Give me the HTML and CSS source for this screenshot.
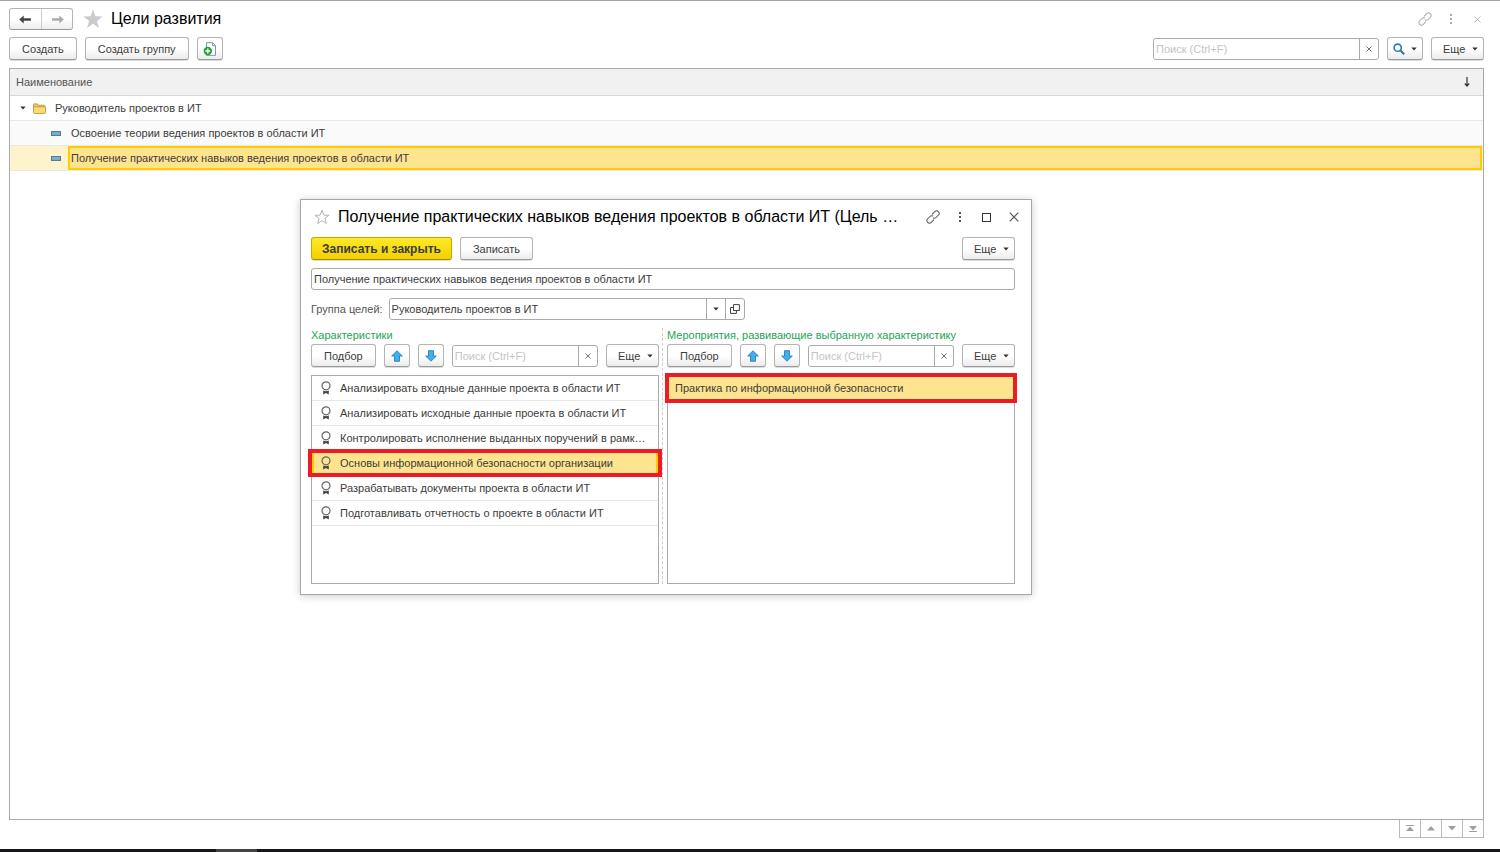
FILE: index.html
```html
<!DOCTYPE html>
<html lang="ru">
<head>
<meta charset="utf-8">
<title>Цели развития</title>
<link rel="stylesheet" href="styles.css">
</head>
<body>
<svg class="defs" aria-hidden="true">
  <symbol id="link" viewBox="0 0 14 14"><g transform="rotate(-45 7 7)" fill="none" stroke="currentColor" stroke-width="1" stroke-linecap="round"><path d="M5.500 9.500H2a2.500 2.500 0 0 1 0-5h3.200a2.500 2.500 0 0 1 2.300 1.600"/><path d="M8.500 4.500H12a2.500 2.500 0 0 1 0 5H8.800a2.500 2.500 0 0 1-2.300-1.600"/></g></symbol>
  <symbol id="dots" viewBox="0 0 4 12"><path fill="currentColor" d="M1 1h2v2H1zM1 5h2v2H1zM1 9h2v2H1z"/></symbol>
  <symbol id="cross" viewBox="0 0 10 10"><path d="M.7.7l8.600 8.600M9.300.7.7 9.300" fill="none" stroke="currentColor" stroke-width="1.200"/></symbol>
  <symbol id="caret" viewBox="0 0 6 4"><path d="M.3.5h5.400L3 3.500z" fill="currentColor"/></symbol>
  <symbol id="arrow" viewBox="0 0 14 10"><path d="M0 5 5 .5v3.200h8v2.600H5v3.200z" fill="currentColor"/></symbol>
  <symbol id="up" viewBox="0 0 12 12"><path d="M6 .8 11.300 6H8.500v5.300h-5V6H.7z" fill="#3fb0ee" stroke="#2a7fb4" stroke-width=".9" stroke-linejoin="round"/></symbol>
  <symbol id="down" viewBox="0 0 12 12"><path d="M6 11.200.7 6h2.800V.7h5V6h2.800z" fill="#3fb0ee" stroke="#2a7fb4" stroke-width=".9" stroke-linejoin="round"/></symbol>
  <symbol id="medal" viewBox="0 0 10 14"><circle cx="5" cy="4.800" r="4" fill="none" stroke="#666" stroke-width="1.200"/><path d="M2.200 9.500q2.800 1.300 5.600 0V13.500L5 12 2.200 13.500z" fill="#444"/></symbol>
</svg>

<main class="page">
  <header class="titlebar">
    <div class="nav">
      <button type="button" class="nav-btn" aria-label="Назад"><svg class="arrow"><use href="#arrow"/></svg></button>
      <button type="button" class="nav-btn nav-next" aria-label="Вперед"><svg class="arrow"><use href="#arrow"/></svg></button>
    </div>
    <svg class="star" viewBox="0 0 20 20"><path d="M10 .5l2.400 6.800 7.200.2-5.700 4.400 2 7L10 14.800l-5.900 4.100 2-7L.4 7.500l7.200-.2z" fill="#c9cbcd"/></svg>
    <h1 class="title">Цели развития</h1>
    <div class="win-tools muted">
      <button type="button" class="bare" aria-label="Ссылка"><svg class="i-link"><use href="#link"/></svg></button>
      <button type="button" class="bare" aria-label="Меню"><svg class="i-dots"><use href="#dots"/></svg></button>
      <button type="button" class="bare" aria-label="Закрыть"><svg class="i-small"><use href="#cross"/></svg></button>
    </div>
  </header>

  <div class="toolbar">
    <button type="button" class="btn">Создать</button>
    <button type="button" class="btn">Создать группу</button>
    <button type="button" class="btn icon-btn" aria-label="Создать копированием"><svg class="i-doc" viewBox="0 0 14 14"><path d="M3.500.6h6l3 3v9.800h-9z" fill="#fff" stroke="#7f98ad"/><path d="M9.500.6v3h3" fill="none" stroke="#7f98ad"/><circle cx="4.800" cy="9" r="4.200" fill="#25a336"/><path d="M4.800 6.600v4.800M2.400 9h4.800" stroke="#fff" stroke-width="1.400"/></svg></button>
    <div class="search search-main">
      <input class="field" type="text" placeholder="Поиск (Ctrl+F)" aria-label="Поиск">
      <button type="button" class="seg" aria-label="Очистить"><svg class="i-x"><use href="#cross"/></svg></button>
    </div>
    <button type="button" class="btn find" aria-label="Найти"><svg class="i-find" viewBox="0 0 12 12"><circle cx="4.700" cy="4.700" r="3.600" fill="none" stroke="#2878b4" stroke-width="1.600"/><path d="M7.500 7.500l3.700 3.700" stroke="#2878b4" stroke-width="2"/></svg><svg class="i-caret"><use href="#caret"/></svg></button>
    <button type="button" class="btn more">Еще<svg class="i-caret"><use href="#caret"/></svg></button>
  </div>

  <section class="grid">
    <table class="tree">
      <thead>
        <tr><th scope="col"><div class="head">Наименование<svg class="i-sort" viewBox="0 0 6 10"><path d="M3 0v9M.8 6.500 3 9l2.200-2.500" fill="none" stroke="#333" stroke-width="1.200"/></svg></div></th></tr>
      </thead>
      <tbody>
        <tr><td><div class="node"><svg class="i-caret open"><use href="#caret"/></svg><svg class="i-folder" viewBox="0 0 13 11"><path d="M.5 9.500V1.700q0-.8.8-.8h3l1.200 1.400h5.200q.8 0 .8.800v1" fill="#f0c95c" stroke="#c59a35"/><path d="M.5 3.800h12v5.700q0 .9-.9.9H1.400q-.9 0-.9-.9z" fill="#fcd978" stroke="#c99f3c"/></svg><span>Руководитель проектов в ИТ</span></div></td></tr>
        <tr class="alt"><td><div class="leaf"><span class="dash"></span><span class="cell">Освоение теории ведения проектов в области ИТ</span></div></td></tr>
        <tr class="current"><td><div class="leaf"><span class="dash"></span><span class="cell">Получение практических навыков ведения проектов в области ИТ</span></div></td></tr>
      </tbody>
    </table>
  </section>
  <nav class="pager" aria-label="Прокрутка">
    <button type="button" aria-label="В начало"><svg viewBox="0 0 8 7"><path d="M0 0h8v1H0zM0 6h8L4 1.500z"/></svg></button>
    <button type="button" aria-label="Вверх"><svg viewBox="0 0 8 7"><path d="M0 5.500h8L4 1z"/></svg></button>
    <button type="button" aria-label="Вниз"><svg viewBox="0 0 8 7"><path d="M0 1h8L4 5.500z"/></svg></button>
    <button type="button" aria-label="В конец"><svg viewBox="0 0 8 7"><path d="M0 6h8v1H0zM0 1h8L4 5.500z"/></svg></button>
  </nav>
</main>
<div class="taskbar"><span class="task"></span></div>

<div class="dialog" role="dialog" aria-labelledby="dlg-title">
  <header class="dlg-head">
    <svg class="dlg-star" viewBox="0 0 16 16"><path d="M8 1.200l1.800 4.900 5.200.2-4.100 3.200 1.400 5L8 11.600l-4.300 2.900 1.400-5L1 6.300l5.200-.2z" fill="none" stroke="#b4b4b4"/></svg>
    <h2 class="title dlg-title" id="dlg-title">Получение практических навыков ведения проектов в области ИТ (Цель …</h2>
    <div class="win-tools">
      <button type="button" class="bare" aria-label="Ссылка"><svg class="i-link"><use href="#link"/></svg></button>
      <button type="button" class="bare" aria-label="Меню"><svg class="i-dots"><use href="#dots"/></svg></button>
      <button type="button" class="bare" aria-label="Развернуть"><span class="square"></span></button>
      <button type="button" class="bare" aria-label="Закрыть"><svg class="i-close"><use href="#cross"/></svg></button>
    </div>
  </header>
  <div class="dlg-body">
    <div class="toolbar">
      <button type="button" class="btn primary">Записать и закрыть</button>
      <button type="button" class="btn">Записать</button>
      <button type="button" class="btn more push">Еще<svg class="i-caret"><use href="#caret"/></svg></button>
    </div>
    <input class="field boxed" type="text" aria-label="Наименование" value="Получение практических навыков ведения проектов в области ИТ">
    <div class="group-row">
      <label for="group">Группа целей:</label>
      <div class="search group">
        <input class="field" id="group" type="text" value="Руководитель проектов в ИТ">
        <button type="button" class="seg" aria-label="Выбрать"><svg class="i-caret"><use href="#caret"/></svg></button>
        <button type="button" class="seg" aria-label="Открыть"><svg class="i-open" viewBox="0 0 10 10"><path d="M3.500.6h5.900v5.900H3.500zM3.500 3.500h-3v5.900h5.900V6.500" fill="none" stroke="#444"/></svg></button>
      </div>
    </div>
    <div class="columns">
      <section class="col">
        <h3 class="caption">Характеристики</h3>
        <div class="toolbar">
          <button type="button" class="btn">Подбор</button>
          <button type="button" class="btn icon-btn" aria-label="Вверх"><svg class="i-move"><use href="#up"/></svg></button>
          <button type="button" class="btn icon-btn" aria-label="Вниз"><svg class="i-move"><use href="#down"/></svg></button>
          <div class="search">
            <input class="field" type="text" placeholder="Поиск (Ctrl+F)" aria-label="Поиск характеристик">
            <button type="button" class="seg" aria-label="Очистить"><svg class="i-x"><use href="#cross"/></svg></button>
          </div>
          <button type="button" class="btn more">Еще<svg class="i-caret"><use href="#caret"/></svg></button>
        </div>
        <ul class="list">
          <li><svg class="i-medal"><use href="#medal"/></svg><span>Анализировать входные данные проекта в области ИТ</span></li>
          <li><svg class="i-medal"><use href="#medal"/></svg><span>Анализировать исходные данные проекта в области ИТ</span></li>
          <li><svg class="i-medal"><use href="#medal"/></svg><span>Контролировать исполнение выданных поручений в рамк…</span></li>
          <li class="picked marked"><svg class="i-medal"><use href="#medal"/></svg><span>Основы информационной безопасности организации</span></li>
          <li><svg class="i-medal"><use href="#medal"/></svg><span>Разрабатывать документы проекта в области ИТ</span></li>
          <li><svg class="i-medal"><use href="#medal"/></svg><span>Подготавливать отчетность о проекте в области ИТ</span></li>
        </ul>
      </section>
      <div class="divider"></div>
      <section class="col">
        <h3 class="caption">Мероприятия, развивающие выбранную характеристику</h3>
        <div class="toolbar">
          <button type="button" class="btn">Подбор</button>
          <button type="button" class="btn icon-btn" aria-label="Вверх"><svg class="i-move"><use href="#up"/></svg></button>
          <button type="button" class="btn icon-btn" aria-label="Вниз"><svg class="i-move"><use href="#down"/></svg></button>
          <div class="search">
            <input class="field" type="text" placeholder="Поиск (Ctrl+F)" aria-label="Поиск мероприятий">
            <button type="button" class="seg" aria-label="Очистить"><svg class="i-x"><use href="#cross"/></svg></button>
          </div>
          <button type="button" class="btn more">Еще<svg class="i-caret"><use href="#caret"/></svg></button>
        </div>
        <ul class="list plain">
          <li class="marked"><span>Практика по информационной безопасности</span></li>
        </ul>
      </section>
    </div>
  </div>
</div>
</body>
</html>
```
FILE: styles.css
```css
* { box-sizing: border-box; }

body {
  margin: 0;
  min-height: 100vh;
  display: flex;
  flex-direction: column;
  position: relative;
  border-top: 1px solid #a6a6a6;
  background: #fff;
  color: #3c3c3c;
  font: 11px/16px "Liberation Sans", Arial, sans-serif;
}

button, input { font: inherit; color: inherit; margin: 0; }
svg { display: block; flex: none; }
.defs { position: absolute; width: 0; height: 0; }

.page {
  flex: 1;
  display: flex;
  flex-direction: column;
  padding: 7px 16px 11px 9px;
}

.title {
  margin: 0;
  color: #000;
  font-size: 16px;
  line-height: 20px;
  font-weight: normal;
}

/* Title bar */
.titlebar { display: flex; align-items: center; height: 22px; }
.nav {
  display: flex;
  height: 22px;
  border: 1px solid #b4b4b4;
  border-bottom-color: #999;
  border-radius: 3px;
  background: linear-gradient(#fff 50%, #ededed);
}
.nav-btn {
  width: 31px;
  padding: 0;
  border: 0;
  background: none;
  display: flex;
  align-items: center;
  justify-content: center;
  color: #444;
}
.nav-next { border-left: 1px solid #ccc; color: #aaa; }
.nav-next .arrow { transform: scaleX(-1); }
.arrow { width: 13px; height: 9px; }
.star { width: 20px; height: 20px; margin: 0 8px 0 10px; }
.win-tools { display: flex; align-items: center; margin-left: auto; color: #555; }
.muted { color: #aaa; }
.bare {
  width: 27px;
  height: 20px;
  padding: 0;
  border: 0;
  background: none;
  display: flex;
  align-items: center;
  justify-content: center;
}
.muted .bare { width: 26px; }
.muted { margin-right: -6px; }
.i-link { width: 14px; height: 14px; overflow: visible; }
.i-dots { width: 4px; height: 12px; }
.i-small { width: 7px; height: 7px; }
.i-close { width: 10px; height: 10px; }
.square { width: 9px; height: 9px; border: 1px solid #333; }

/* Command bars */
.toolbar { display: flex; align-items: center; gap: 8px; }
.page > .toolbar { margin: 7px 0 8px; }
.btn {
  height: 23px;
  padding: 0 12px;
  border: 1px solid #b4b4b4;
  border-bottom-color: #999;
  border-radius: 3px;
  background: linear-gradient(#fff 50%, #ececec);
  box-shadow: 0 1px 0 #ddd;
  white-space: nowrap;
  display: flex;
  align-items: center;
  justify-content: center;
}
.icon-btn { width: 26px; padding: 0; }
.more { width: 53px; padding: 0 5px 0 11px; justify-content: space-between; }
.find { padding: 0 5px; gap: 6px; }
.push { margin-left: auto; }
.primary {
  padding: 0 10px;
  border-color: #c9a900;
  border-bottom-color: #a88d00;
  background: linear-gradient(#ffe926, #f3d000);
  font-size: 12px;
  font-weight: bold;
}
.i-caret { width: 6px; height: 4px; color: #333; }
.i-doc { width: 14px; height: 14px; }
.i-find { width: 12px; height: 12px; }
.i-move { width: 12px; height: 12px; }
.i-x { width: 6px; height: 6px; }
.i-open { width: 10px; height: 10px; }

.search {
  flex: 1;
  display: flex;
  min-width: 0;
  height: 22px;
  border: 1px solid #aaa;
  border-radius: 3px;
  background: #fff;
}
.search-main { flex: 0 1 226px; margin-left: auto; }
.field {
  flex: 1;
  min-width: 0;
  padding: 0 2px;
  border: 0;
  border-radius: 3px;
  background: #fff;
  outline: 0;
}
.field::placeholder { color: #c4c4c4; opacity: 1; }
.boxed { flex: none; width: 100%; height: 22px; border: 1px solid #aaa; }
.seg {
  width: 19px;
  padding: 0;
  border: 0;
  border-left: 1px solid #aaa;
  background: none;
  display: flex;
  align-items: center;
  justify-content: center;
}

/* Goal tree */
.grid { flex: 1; border: 1px solid #aaa; }
.tree { width: 100%; border-collapse: collapse; }
.tree th, .tree td { padding: 0; font-weight: normal; text-align: left; }
.head {
  display: flex;
  align-items: center;
  justify-content: space-between;
  height: 27px;
  padding: 0 13px 0 6px;
  border-bottom: 1px solid #d8d8d8;
  background: #f1f1f1;
  color: #555;
}
.i-sort { width: 6px; height: 10px; }
.node, .leaf { display: flex; align-items: center; height: 25px; border-bottom: 1px solid #e8e8e8; }
.node { padding-left: 10px; }
.i-folder { width: 13px; height: 11px; margin: 0 9px 0 7px; }
.leaf { padding: 0 1px 0 41px; }
.alt { background: #fafafa; }
.dash { width: 10px; height: 5px; margin-right: 7px; border: 1px solid #4a7ea3; background: #7aaccf; }
.cell { flex: 1; padding: 2px 1px; border: 2px solid transparent; }
.current { background: #fff3cb; }
.current .cell { border-color: #fc0; background: #ffe48f; }

.pager { display: flex; align-self: flex-end; }
.pager button {
  width: 22px;
  height: 18px;
  margin-left: -1px;
  padding: 0;
  border: 1px solid #bbb;
  border-top: 0;
  background: #fff;
  display: flex;
  align-items: center;
  justify-content: center;
}
.pager svg { width: 8px; height: 7px; fill: #a0a0a0; }

.taskbar { display: flex; height: 3px; padding-left: 216px; background: #17171a; }
.task { width: 41px; background: #444; }

/* Goal window */
.dialog {
  position: absolute;
  top: 198px;
  left: 300px;
  width: 732px;
  padding: 7px 16px 10px 10px;
  border: 1px solid #a6a6a6;
  background: #fff;
  box-shadow: 0 1px 8px rgba(0, 0, 0, .2);
}
.dlg-head { display: flex; align-items: center; height: 20px; margin-right: -12px; }
.dlg-star { width: 16px; height: 16px; margin: 0 8px 0 3px; }
.dlg-title { white-space: nowrap; }
.dlg-body { display: flex; flex-direction: column; gap: 8px; padding-top: 10px; }
.group-row { display: flex; align-items: center; gap: 6px; color: #555; }
.group { flex: 0 1 356px; color: #3c3c3c; }
.columns { display: flex; }
.col { flex: 1; min-width: 0; }
.divider { margin: 0 4px 0 3px; border-left: 1px dashed #ccc; }
.caption { margin: 0 0 2px; color: #1da556; font-size: 11px; line-height: 14px; font-weight: normal; white-space: nowrap; }
.list {
  height: 209px;
  margin: 8px 0 0;
  padding: 0;
  border: 1px solid #aaa;
  list-style: none;
}
.list li {
  position: relative;
  display: flex;
  align-items: center;
  gap: 9px;
  height: 25px;
  padding: 0 7px 0 9px;
  border-bottom: 1px solid #e8e8e8;
}
.plain li { padding-left: 7px; }
.list span { white-space: nowrap; }
.i-medal { width: 10px; height: 14px; }
.marked { background: #ffe48f; }
.picked { box-shadow: inset 2px 0 #fc0, inset -2px 0 #fc0; }
.marked::after {
  content: "";
  position: absolute;
  inset: -2px -4px;
  border: 4px solid #ed1c24;
}
.plain .marked::after { inset: -3px; }
```
